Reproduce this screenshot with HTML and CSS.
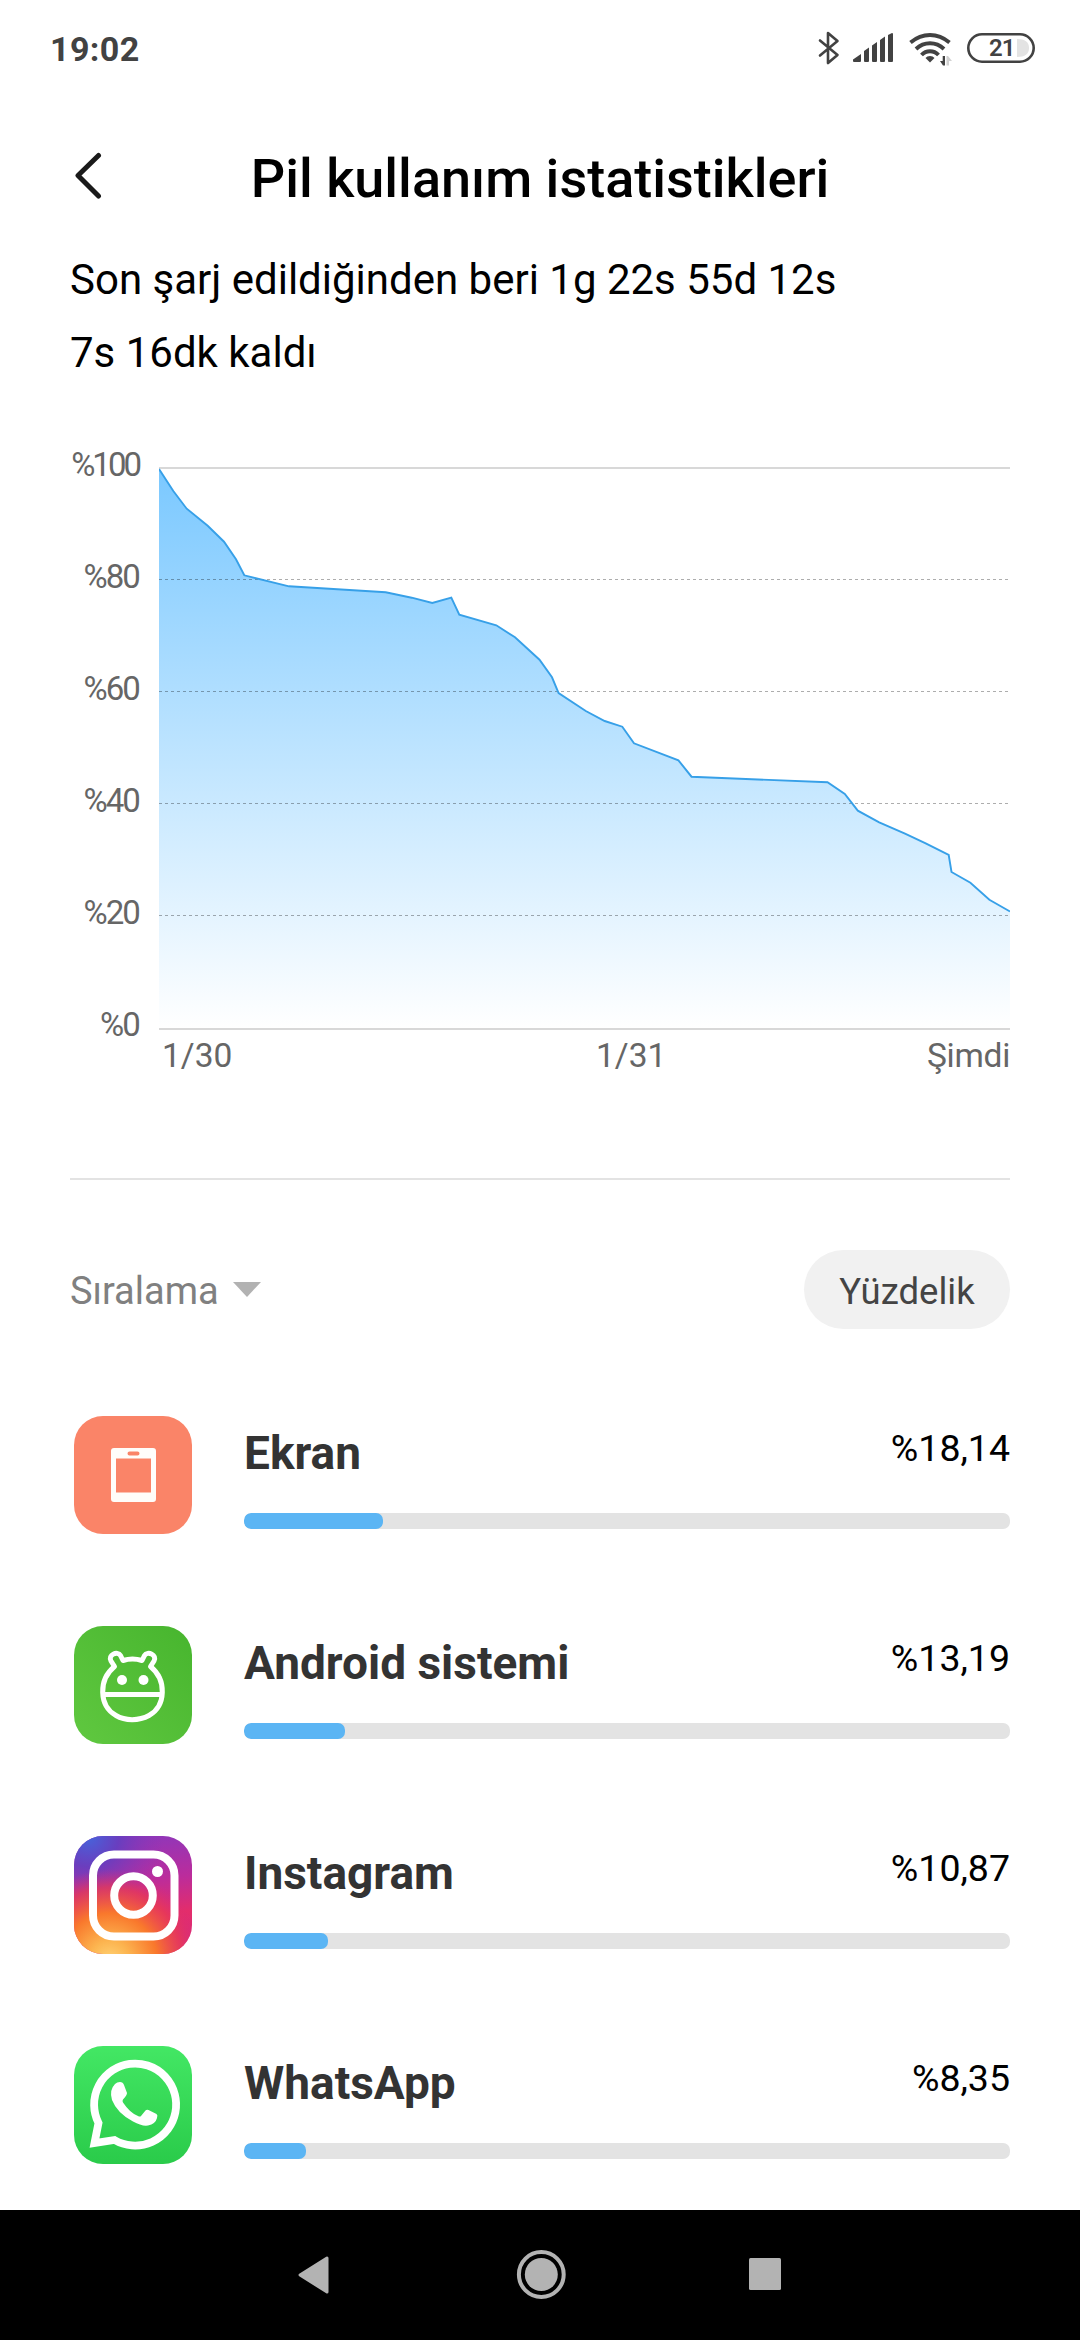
FILE: index.html
```html
<!DOCTYPE html>
<html lang="tr">
<head>
<meta charset="utf-8">
<title>Pil kullanım istatistikleri</title>
<link rel="stylesheet" href="styles.css">
</head>
<body>
<div class="screen">
  <div class="status">
    <span class="clock">19:02</span>
    <div class="status-icons">
      <svg class="bt" width="22" height="36" viewBox="0 0 22 36" fill="none" stroke="#424242" stroke-width="2.6" stroke-linejoin="round" stroke-linecap="round"><path d="M2 10.500 19.500 25 10 33V3l9.500 8L2 25.500"/></svg>
      <svg class="signal" width="40" height="36" viewBox="0 0 40 36" fill="#424242"><path d="M0 29.500l8-5.500v7q0 1-1 1H1q-1 0-1-1zM11 21l5-3.500V31q0 1-1 1h-3q-1 0-1-1zM19 15.500l5-3.500v19q0 1-1 1h-3q-1 0-1-1zM27 10l5-3.500V31q0 1-1 1h-3q-1 0-1-1zM35 5l4-2q1 0 1 1v27q0 1-1 1h-3q-1 0-1-1z"/></svg>
      <svg class="wifi" width="44" height="36" viewBox="0 0 44 36"><g fill="none" stroke="#424242" stroke-width="3.900"><path d="M1.500 12.500Q10.500 5 21 5t19.500 7.500"/><path d="M7 19Q13 13.200 21 13.200T35 19"/><path d="M12.500 25Q16 21.200 21 21.200T29.500 25"/></g><path d="M21 26q3 0 4.500 2L21 32.500 16.500 28Q18 26 21 26z" fill="#424242"/><path d="M36 26v9.500h-2L31 31h2.700v-5z" fill="#424242"/><path d="M37.500 35.500V26h1.500l4 5h-3v4.500z" fill="#d2d2d2"/></svg>
      <div class="battery"><svg width="68" height="30" viewBox="0 0 68 30"><rect x="1.300" y="1.300" width="65.400" height="27.400" rx="13.700" fill="none" stroke="#424242" stroke-width="2.600"/><path d="M50 6q12 0 12 9t-12 9z" fill="#e3e3e3"/></svg><span>21</span></div>
    </div>
  </div>

  <header class="header">
    <svg class="back" width="30" height="50" viewBox="0 0 30 50" fill="none" stroke="#1a1a1a" stroke-width="5" stroke-linecap="round" stroke-linejoin="round"><path d="M26.500 4.500 6 24.500 26.500 45"/></svg>
    <h1>Pil kullanım istatistikleri</h1>
  </header>

  <div class="summary">
    <p>Son şarj edildiğinden beri 1g 22s 55d 12s</p>
    <p>7s 16dk kaldı</p>
  </div>

  <section class="chart">
    <div class="y-axis"><span class="full">%100</span><span>%80</span><span>%60</span><span>%40</span><span>%20</span><span>%0</span></div>
    <div class="plot">
      <svg width="851" height="563" viewBox="159 467 851 563">
        <defs><linearGradient id="area" gradientUnits="userSpaceOnUse" x1="0" y1="467" x2="0" y2="1028"><stop offset="0" stop-color="#7ac8ff"/><stop offset="1" stop-color="#fff"/></linearGradient></defs>
        <path d="M159 467h851v2H159zM159 1028h851v2H159z" fill="#d8d8d8"/>
        <path fill="url(#area)" d="M159 469L173.300 491 186.700 508.700 207.700 525.700 224 541.700 236 559.300 244.300 575.300 289 586.300 385.700 592.300 411.700 597.700 432.300 603 451.300 597.700 459.300 614.700 496.300 625.300 515 637.300 539.500 659.700 552 677.300 558.600 693 585.800 711 604.700 721 622.300 726.700 634 743.300 678.400 760.300 691.500 776.700 827.500 782.300 844.800 794 857.800 810.700 879.200 822.300 905 833.700 925.700 843.300 948.700 855 951.500 872 970.400 882.700 989.400 899.700 1010 911.500V1028H159z"/>
        <path d="M159 579.500h851M159 691.500h851M159 803.500h851M159 915.500h851" stroke="#000" stroke-opacity=".32" stroke-dasharray="3 3"/>
        <path fill="none" stroke="#37a0e8" stroke-width="1.900" d="M159 469L173.300 491 186.700 508.700 207.700 525.700 224 541.700 236 559.300 244.300 575.300 289 586.300 385.700 592.300 411.700 597.700 432.300 603 451.300 597.700 459.300 614.700 496.300 625.300 515 637.300 539.500 659.700 552 677.300 558.600 693 585.800 711 604.700 721 622.300 726.700 634 743.300 678.400 760.300 691.500 776.700 827.500 782.300 844.800 794 857.800 810.700 879.200 822.300 905 833.700 925.700 843.300 948.700 855 951.500 872 970.400 882.700 989.400 899.700 1010 911.500"/>
      </svg>
      <div class="x-axis"><span>1/30</span><span>1/31</span><span>Şimdi</span></div>
    </div>
  </section>

  <div class="divider"></div>

  <div class="toolbar">
    <div class="sort"><span>Sıralama</span><svg width="28" height="15" viewBox="0 0 28 15"><path d="M0 0h28L14 15z" fill="#b2b2b2"/></svg></div>
    <div class="pill">Yüzdelik</div>
  </div>

  <div class="list">
    <div class="row">
      <svg class="icon" viewBox="0 0 118 118"><rect width="118" height="118" rx="29" fill="#fa8468"/><path fill="#fffdfa" fill-rule="evenodd" d="M40 32h39q3 0 3 3v48q0 3-3 3H40q-3 0-3-3V35q0-3 3-3zM42 42.500v34h35v-34zM55.500 35.500a2 2 0 0 0 0 4h8a2 2 0 0 0 0-4z"/></svg>
      <div class="info"><div class="line"><h2>Ekran</h2><span>%18,14</span></div><div class="bar"><div class="fill" style="width:18.14%"></div></div></div>
    </div>
    <div class="row">
      <svg class="icon" viewBox="0 0 118 118"><defs><linearGradient id="andr" x1="0" y1="1" x2="1" y2="0"><stop offset="0" stop-color="#60c840"/><stop offset="1" stop-color="#47b52e"/></linearGradient></defs><rect width="118" height="118" rx="29" fill="url(#andr)"/><g fill="none" stroke="#fff" stroke-width="5"><path stroke-linejoin="round" d="M49 34.500Q58.500 31.500 68 34.500L70.500 29.500C73.500 24.500 83.500 29 80 35L76.500 40.500C93 54 92 80 75 89.500C65 95 51 95 42 89.500C25 80 24 54 40.500 40.500L37 35C33.500 29 43.500 24.500 46.500 29.500z"/><path d="M29 68.500h59"/></g><circle cx="48" cy="54" r="5" fill="#fff"/><circle cx="69.500" cy="54" r="5" fill="#fff"/></svg>
      <div class="info"><div class="line"><h2>Android sistemi</h2><span>%13,19</span></div><div class="bar"><div class="fill" style="width:13.19%"></div></div></div>
    </div>
    <div class="row">
      <svg class="icon" viewBox="0 0 118 118"><defs>
        <linearGradient id="igBase" x1=".75" y1="0" x2=".85" y2="1"><stop offset="0" stop-color="#9236b8"/><stop offset=".35" stop-color="#bb2c9c"/><stop offset=".65" stop-color="#e32d6b"/><stop offset="1" stop-color="#d62a80"/></linearGradient>
        <radialGradient id="igBlue" cx=".12" cy="0" r=".65"><stop offset="0" stop-color="#4565dc"/><stop offset=".4" stop-color="#643fc0" stop-opacity=".9"/><stop offset="1" stop-color="#8c35b5" stop-opacity="0"/></radialGradient>
        <radialGradient id="igWarm" cx=".3" cy="1.060" r=".78"><stop offset="0" stop-color="#ffd477"/><stop offset=".22" stop-color="#fcb44f"/><stop offset=".52" stop-color="#f9782c"/><stop offset=".8" stop-color="#e83a55" stop-opacity=".75"/><stop offset="1" stop-color="#d82c78" stop-opacity="0"/></radialGradient></defs>
        <rect width="118" height="118" rx="29" fill="url(#igBase)"/><rect width="118" height="118" rx="29" fill="url(#igBlue)"/><rect width="118" height="118" rx="29" fill="url(#igWarm)"/>
        <g fill="none" stroke="#fff" stroke-width="8"><rect x="19" y="18.500" width="81.500" height="82" rx="21"/><circle cx="59.500" cy="59.500" r="19.300"/></g><circle cx="83.500" cy="35.500" r="5.500" fill="#fff"/></svg>
      <div class="info"><div class="line"><h2>Instagram</h2><span>%10,87</span></div><div class="bar"><div class="fill" style="width:11%"></div></div></div>
    </div>
    <div class="row">
      <svg class="icon" viewBox="0 0 118 118"><defs><linearGradient id="wa" x1="0" y1="0" x2="0" y2="1"><stop offset="0" stop-color="#43e764"/><stop offset="1" stop-color="#2acb4a"/></linearGradient></defs><rect width="118" height="118" rx="29" fill="url(#wa)"/><path d="M20.500 97L24.500 77A41 41 0 1 1 40.500 94z" fill="none" stroke="#fff" stroke-width="7.800"/><path fill="#fff" d="M41 38q2-2 5-2 3 0 4 3l3 8q0 2-4 6.500-1 1.500 0 3Q56 67 64 70q2 1 3 0l4.500-5.500q1-1 3-.5l8 4q1.500 1 .5 4-1.500 6-9 7.500-6 1-15-4Q43 67 38 54q-3-10 3-16z"/></svg>
      <div class="info"><div class="line"><h2>WhatsApp</h2><span>%8,35</span></div><div class="bar"><div class="fill" style="width:8.1%"></div></div></div>
    </div>
  </div>

  <nav class="nav">
    <svg width="486" height="50" viewBox="296 2251 486 50" fill="#b3b3b3"><path d="M299 2276l27-17v34z" stroke="#b3b3b3" stroke-width="3" stroke-linejoin="round"/><circle cx="540.300" cy="2275.500" r="16.500"/><circle cx="540.300" cy="2275.500" r="22.400" fill="none" stroke="#b3b3b3" stroke-width="4"/><rect x="748" y="2259" width="32" height="32" rx="1.500"/></svg>
  </nav>
</div>
</body>
</html>
```
FILE: styles.css
```css
* { box-sizing: border-box; }
body { margin: 0; background: #fff; font-family: Roboto, "Noto Sans", sans-serif; color: #000; }
h1, h2, p { margin: 0; }
svg { display: block; }
.screen { width: 1080px; height: 2340px; overflow: hidden; display: flex; flex-direction: column; }

.status { height: 96px; padding: 0 45px 0 50px; display: flex; align-items: center; justify-content: space-between; }
.clock { font-size: 34px; font-weight: 700; letter-spacing: .4px; color: #424242; margin-top: 1px; }
.status-icons { display: flex; align-items: center; }
.signal { margin-left: 13px; }
.wifi { margin-left: 16px; }
.battery { margin-left: 14px; width: 68px; height: 30px; display: grid; }
.battery > * { grid-area: 1 / 1; }
.battery span { font-size: 24px; font-weight: 600; line-height: 31px; color: #424242; padding-left: 22px; letter-spacing: -1px; }

.header { height: 147px; padding: 18px 72px 0; display: grid; grid-template-columns: 30px 1fr 30px; align-items: center; }
.back { margin-bottom: 5px; }
.header h1 { font-size: 54px; line-height: 64px; font-weight: 500; text-align: center; white-space: nowrap; }

.summary { padding-left: 70px; font-size: 42px; line-height: 73px; }

.chart { margin: 20px 70px 0; height: 672px; display: grid; grid-template-columns: 89px 851px; color: #666; font-size: 33.5px; }
.y-axis { display: flex; flex-direction: column; text-align: right; padding-right: 20px; line-height: 112px; font-size: 33px; font-weight: 400; letter-spacing: -1.9px; }
.y-axis .full { letter-spacing: -3px; }
.plot { padding-top: 58px; }
.x-axis { display: grid; grid-template-columns: 434px 1fr auto; line-height: 51px; padding-left: 3px; }
.x-axis span:last-child { letter-spacing: -.3px; }

.divider { margin: 97px 70px 0; height: 2px; background: #e3e3e3; }

.toolbar { margin: 70px 70px 41px; height: 79px; display: flex; align-items: center; justify-content: space-between; }
.sort { display: flex; align-items: center; gap: 14px; font-size: 38px; color: #808080; }
.sort span { padding-top: 3px; }
.pill { width: 206px; height: 79px; border-radius: 40px; background: #f1f1f1; color: #444; font-size: 36.5px; line-height: 83px; text-align: center; }

.row { height: 210px; padding: 0 70px 0 74px; display: flex; gap: 52px; }
.icon { width: 118px; height: 118px; margin-top: 46px; flex: none; }
.info { flex: 1; padding-top: 50px; }
.line { height: 66px; display: flex; justify-content: space-between; }
.line h2 { font-size: 46px; line-height: 66px; font-weight: 700; color: #333; }
.line span { font-size: 37.5px; line-height: 56px; }
.bar { margin-top: 27px; height: 16px; border-radius: 7px; background: #e3e3e3; overflow: hidden; }
.fill { height: 16px; border-radius: 7px; background: #5bb5f4; }

.nav { height: 130px; background: #000; display: flex; align-items: center; justify-content: center; }
```
